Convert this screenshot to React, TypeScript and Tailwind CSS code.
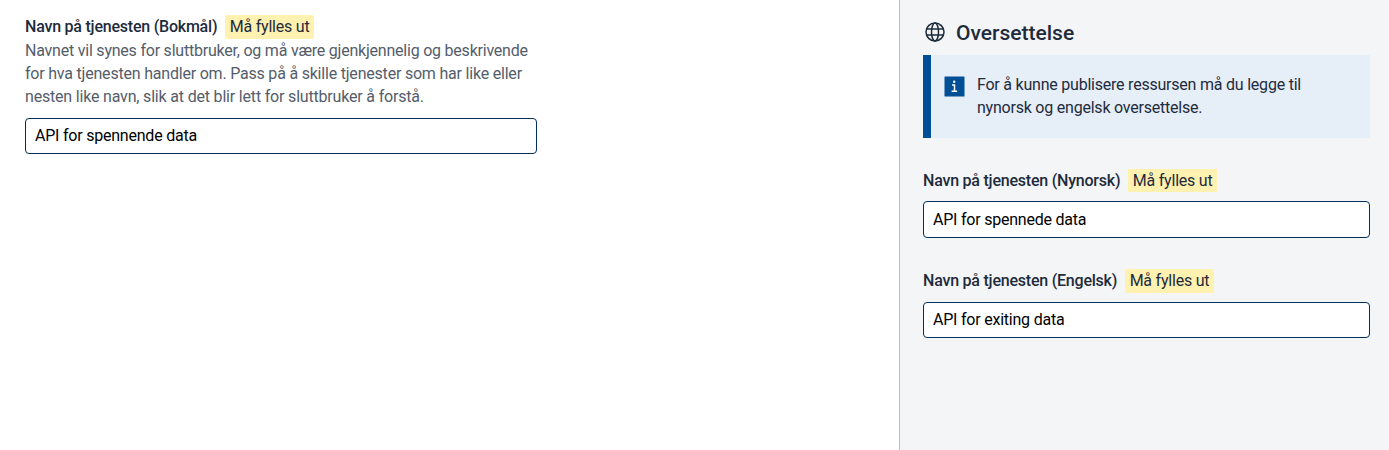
import React from "react";

function Tag({ className = "h-6 rounded-[2px]" }: { className?: string }) {
  return (
    <span
      className={`flex items-center bg-[#fff1b0] px-[4.5px] text-[16px] font-normal text-[#1e2b3c] ${className}`}
    >
      Må fylles ut
    </span>
  );
}

function Label({ text, tagClass }: { text: string; tagClass?: string }) {
  return (
    <div className="flex h-6 items-start gap-2 whitespace-nowrap text-[16px] font-medium leading-6 tracking-[-0.22px] text-[#1e2b3c]">
      <span>{text}</span>
      <Tag className={tagClass} />
    </div>
  );
}

function Field({ value, className = "h-9 pb-[2px]" }: { value: string; className?: string }) {
  return (
    <input
      defaultValue={value}
      className={`block w-full rounded-[4px] border border-[#00315d] bg-white px-[9px] text-[16px] tracking-[-0.22px] text-black outline-none ${className}`}
    />
  );
}

export default function App() {
  return (
    <div className="flex h-[450px] w-[1389px] overflow-hidden bg-white font-[Roboto,sans-serif]">
      <main className="flex-1 pl-[25px] pt-[15px]">
        <div className="w-[512px]">
          <Label text="Navn på tjenesten (Bokmål)" />
          <p className="mb-[10px] whitespace-nowrap text-[16px] leading-[23px] tracking-[-0.22px] text-[#545d6a]">
            Navnet vil synes for sluttbruker, og må være gjenkjennelig og beskrivende
            <br />
            <span className="tracking-[-0.205px]">
              for hva tjenesten handler om. Pass på å skille tjenester som har like eller
            </span>
            <br />
            <span className="tracking-[-0.185px]">
              nesten like navn, slik at det blir lett for sluttbruker å forstå.
            </span>
          </p>
          <Field value="API for spennende data" />
        </div>
      </main>
      <aside className="w-[490px] border-l border-[#bcbfc8] bg-[#f4f5f6] pl-[23px] pr-[19px] pt-[21px]">
        <h2 className="flex h-6 items-center gap-[9px] text-[21px] font-medium text-[#1e2b3c]">
          <svg className="-mt-[2px]" width="24" height="24" viewBox="0 0 24 24" fill="none" stroke="currentColor" strokeWidth="1.5">
            <circle cx="12" cy="12" r="9" />
            <ellipse cx="12" cy="12" rx="3.5" ry="9" />
            <path d="M3.5 9h17M3.5 15h17" />
          </svg>
          <span className="pt-[2px]">Oversettelse</span>
        </h2>
        <div className="mt-[10px] flex h-[83px] gap-[11px] border-l-8 border-[#004e95] bg-[#e6eef8] pl-[11px] pt-[18px]">
          <svg className="mt-[1px]" width="24" height="24" viewBox="0 0 24 24">
            <rect x="2.5" y="2.5" width="20" height="20" rx="0.5" fill="#004e95" />
            <circle cx="12.2" cy="7.8" r="1.2" fill="white" />
            <path d="M10 11h2.5v6.2M9.6 17.2h5.6" fill="none" stroke="white" strokeWidth="1.5" />
          </svg>
          <p className="text-[16px] leading-[23px] tracking-[-0.22px] text-[#1e2b3c]">
            For å kunne publisere ressursen må du legge til
            <br />
            nynorsk og engelsk oversettelse.
          </p>
        </div>
        <div className="mt-[31px] flex flex-col gap-[31px]">
          <div className="flex flex-col gap-2">
            <Label text="Navn på tjenesten (Nynorsk)" tagClass="h-[23px]" />
            <Field value="API for spennede data" className="h-[37px] pb-px" />
          </div>
          <div className="flex flex-col gap-[9px]">
            <Label text="Navn på tjenesten (Engelsk)" />
            <Field value="API for exiting data" />
          </div>
        </div>
      </aside>
    </div>
  );
}
